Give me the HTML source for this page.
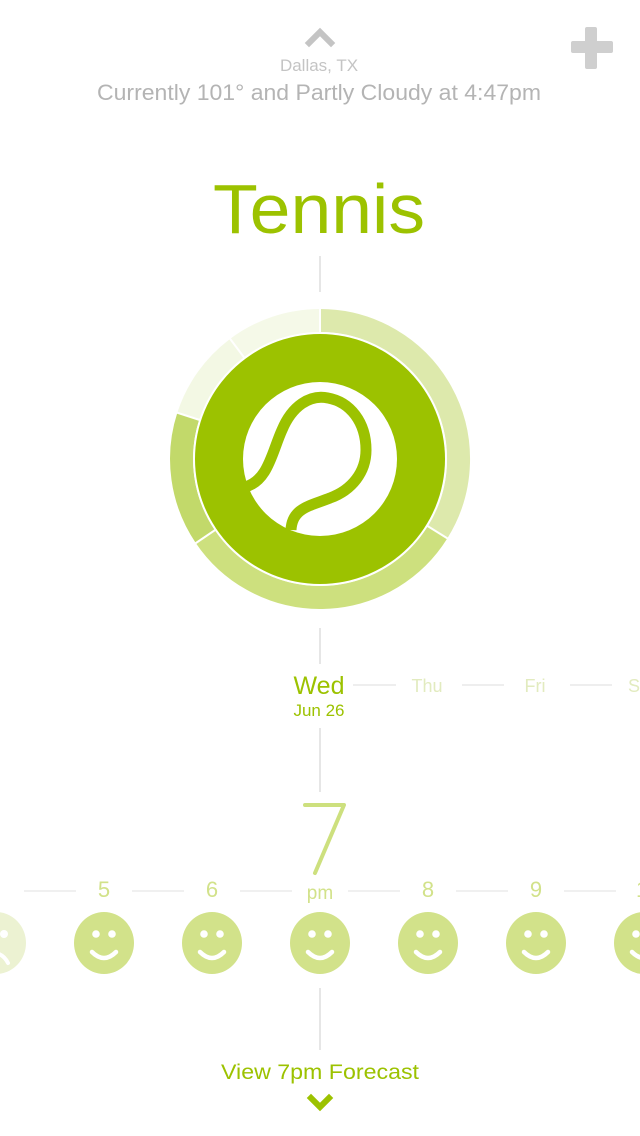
<!DOCTYPE html>
<html><head><meta charset="utf-8"><style>
html,body{margin:0;padding:0;background:#fff;}
body{width:640px;height:1136px;position:relative;overflow:hidden;font-family:"Liberation Sans",sans-serif;}
svg{position:absolute;left:0;top:0;}
</style></head><body>
<svg width="640" height="1136" viewBox="0 0 640 1136" font-family="Liberation Sans, sans-serif">
<path d="M309 43 L320 32 L331 43" fill="none" stroke="#c4c4c4" stroke-width="6" stroke-linecap="square"/>
<rect x="585" y="27" width="12" height="42" rx="2" fill="#cfcfcf"/>
<rect x="571" y="41" width="42" height="12" rx="2" fill="#cfcfcf"/>
<text x="319" y="71" text-anchor="middle" font-size="17" fill="#c4c4c4">Dallas, TX</text>
<text x="319" y="100" text-anchor="middle" font-size="22" fill="#b4b4b4" textLength="444" lengthAdjust="spacingAndGlyphs">Currently 101° and Partly Cloudy at 4:47pm</text>
<text x="319" y="233" text-anchor="middle" font-size="70" fill="#9cc200" textLength="212" lengthAdjust="spacingAndGlyphs">Tennis</text>
<line x1="320" y1="256" x2="320" y2="292" stroke="#e6e6e6" stroke-width="2"/>
<g fill="none" stroke-width="23">
<path d="M320 320.5 A138.5 138.5 0 0 1 437.5 532.4" stroke="#dde9ac"/>
<path d="M437.5 532.4 A138.5 138.5 0 0 1 205.2 536.4" stroke="#cde07e"/>
<path d="M205.2 536.4 A138.5 138.5 0 0 1 188.3 416.2" stroke="#c2d96a"/>
<path d="M188.3 416.2 A138.5 138.5 0 0 1 236.6 348.4" stroke="#f3f8e4"/>
<path d="M236.6 348.4 A138.5 138.5 0 0 1 320 320.5" stroke="#f5f9e8"/>
</g>
<g stroke="#fff" stroke-width="2">
<line x1="320" y1="459" x2="320" y2="305"/>
<line x1="320" y1="459" x2="450" y2="540"/>
<line x1="320" y1="459" x2="193" y2="545"/>
<line x1="320" y1="459" x2="172" y2="411"/>
<line x1="320" y1="459" x2="228" y2="336"/>
</g>
<circle cx="320" cy="459" r="127" fill="#fff"/>
<circle cx="320" cy="459" r="125" fill="#9cc200"/>
<circle cx="320" cy="459" r="77" fill="#fff"/>
<path d="M245 487 C268 481 272 452 282 430 C292 406 310 394 328 398 C350 402 366 422 366 450 C366 472 352 490 330 498 C310 506 292 508 291 530" fill="none" stroke="#9cc200" stroke-width="11"/>
<line x1="320" y1="628" x2="320" y2="664" stroke="#e6e6e6" stroke-width="2"/>
<text x="319" y="694" text-anchor="middle" font-size="25" fill="#9cc200">Wed</text>
<text x="319" y="716" text-anchor="middle" font-size="17" fill="#9cc200">Jun 26</text>
<g stroke="#eeeeee" stroke-width="2">
<line x1="353" y1="685" x2="396" y2="685"/>
<line x1="462" y1="685" x2="504" y2="685"/>
<line x1="570" y1="685" x2="612" y2="685"/>
</g>
<text x="427" y="692" text-anchor="middle" font-size="18" fill="#e2ebbf">Thu</text>
<text x="535" y="692" text-anchor="middle" font-size="18" fill="#e2ebbf">Fri</text>
<text x="628" y="692" font-size="18" fill="#e2ebbf">S</text>
<line x1="320" y1="728" x2="320" y2="792" stroke="#e6e6e6" stroke-width="2"/>
<path d="M305 805 L344 805 L315 873" fill="none" stroke="#cde07e" stroke-width="4" stroke-linecap="round" stroke-linejoin="round"/>
<g stroke="#f0f0f0" stroke-width="2">
<line x1="24" y1="891" x2="76" y2="891"/>
<line x1="132" y1="891" x2="184" y2="891"/>
<line x1="240" y1="891" x2="292" y2="891"/>
<line x1="348" y1="891" x2="400" y2="891"/>
<line x1="456" y1="891" x2="508" y2="891"/>
<line x1="564" y1="891" x2="616" y2="891"/>
</g>
<g font-size="22" fill="#d2e28a" text-anchor="middle">
<text x="104" y="897">5</text><text x="212" y="897">6</text>
<text x="320" y="899" font-size="19">pm</text>
<text x="428" y="897">8</text><text x="536" y="897">9</text>
<text x="636" y="897" text-anchor="start">1</text>
</g>
<g>
<ellipse cx="-4" cy="943" rx="30" ry="31" fill="#ecf2d2"/>
<circle cx="4" cy="934" r="4" fill="#fff"/>
<path d="M-4 953 Q4 955 8 963" fill="none" stroke="#fff" stroke-width="4" stroke-linecap="round"/>
</g>
<g id="s"><ellipse cx="104" cy="943" rx="30" ry="31" fill="#d2e28a"/><circle cx="96" cy="934" r="3.8" fill="#fff"/><circle cx="112" cy="934" r="3.8" fill="#fff"/><path d="M92 952 Q104 964 116 952" fill="none" stroke="#fff" stroke-width="4.5" stroke-linecap="round"/></g>
<use href="#s" x="108"/><use href="#s" x="216"/><use href="#s" x="324"/><use href="#s" x="432"/><use href="#s" x="540"/>
<line x1="320" y1="988" x2="320" y2="1050" stroke="#e6e6e6" stroke-width="2"/>
<text x="320" y="1079" text-anchor="middle" font-size="21" fill="#9cc200" textLength="198" lengthAdjust="spacingAndGlyphs">View 7pm Forecast</text>
<path d="M311 1098 L320 1107 L329 1098" fill="none" stroke="#9cc200" stroke-width="6" stroke-linecap="square"/>
</svg>
</body></html>
